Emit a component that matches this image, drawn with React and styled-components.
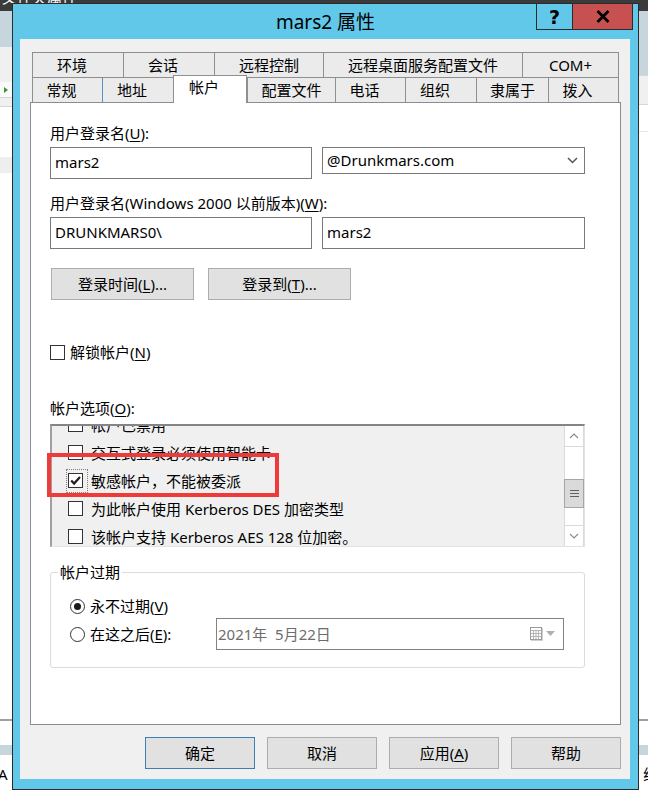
import React, { useLayoutEffect, useRef } from "react";
import styled, { createGlobalStyle } from "styled-components";

const FONT = `"Noto Sans", "Noto Sans CJK SC", sans-serif`;
const FRAME = "#62c8e9";
const BACKBLUE = "#c6d6dc";

const Global = createGlobalStyle`
  html, body { margin: 0; padding: 0; }
  body {
    width: 648px; height: 792px; overflow: hidden;
    font-family: ${FONT}; font-size: 15px; color: #000; background: #fff;
  }
  * { box-sizing: border-box; }
  u { text-decoration-thickness: 1px; text-underline-offset: 2px; }
`;

/* ---------- desktop / window behind ---------- */
const Desktop = styled.div`
  position: relative;
  width: 648px;
  height: 792px;
  overflow: hidden;
  display: flex;
  flex-direction: column;
`;

const BackTitle = styled.div`
  height: 11px;
  flex: 0 0 auto;
  background: #3b3b3b;
  color: #fff;
  overflow: hidden;
  font-size: 15px;
  line-height: 15px;
`;

const BackTitleText = styled.div`
  margin-top: -10px;
  padding-left: 2px;
`;

const BackBody = styled.div`
  flex: 1 1 auto;
  display: flex;
`;

const Pane = styled.div`
  flex: 1 1 0;
  display: flex;
  flex-direction: column;
`;

const Band = styled.div`
  height: ${(p) => (p.$h ? `${p.$h}px` : "auto")};
  flex: ${(p) => (p.$grow ? "1 1 auto" : "0 0 auto")};
  background: ${(p) => p.$bg || "#fff"};
  border-bottom: ${(p) => (p.$line ? `1px solid ${p.$line}` : "none")};
  display: flex;
  align-items: center;
  justify-content: ${(p) => (p.$end ? "flex-end" : "flex-start")};
  overflow: hidden;
  font-size: 15px;
  line-height: 18px;
`;

const ToolIcon = styled.span`
  margin-left: 4px;
  width: 0;
  height: 0;
  border-top: 3px solid transparent;
  border-bottom: 3px solid transparent;
  border-left: 4px solid #3a9a2a;
`;

const EdgeText = styled.span`
  margin: ${(p) => (p.$end ? "0 -10px 0 0" : "0 0 0 -2px")};
`;

/* ---------- dialog ---------- */
const Dialog = styled.div`
  position: absolute;
  left: 12px;
  top: 3px;
  width: 627px;
  height: 787px;
  border: 1px solid #2b2b2b;
  background: ${FRAME};
  display: flex;
  flex-direction: column;
`;

const TitleBar = styled.div`
  position: relative;
  height: 35px;
  flex: 0 0 auto;
  display: flex;
  align-items: center;
  justify-content: center;
`;

const Title = styled.div`
  font-size: 19px;
  line-height: 24px;
  margin-top: 1px;
  color: #000;
`;

const CaptionButtons = styled.div`
  position: absolute;
  top: -1px;
  right: 5px;
  display: flex;
  height: 27px;
`;

const HelpButton = styled.div`
  width: 37px;
  height: 27px;
  border: 1px solid #2b2b2b;
  background: ${FRAME};
  display: flex;
  align-items: center;
  justify-content: center;
  font-family: "DejaVu Sans", sans-serif;
  font-weight: bold;
  font-size: 19px;
  color: #000;
`;

const CloseButton = styled.div`
  width: 61px;
  height: 27px;
  margin-left: -1px;
  border: 1px solid #2b2b2b;
  background: #c75050;
  display: flex;
  align-items: center;
  justify-content: center;
`;

const Client = styled.div`
  flex: 1 1 auto;
  margin: 0 8px 10px 7px;
  background: #f0f0f0;
  padding: 13px 9px 10px 10px;
  display: flex;
  flex-direction: column;
`;

const TabStrip = styled.div`
  margin: 0 2px;
  display: flex;
  flex-direction: column;
`;

const TabRow = styled.div`
  display: flex;
  height: 25px;
`;

const Tab = styled.div`
  position: relative;
  flex: 0 0 auto;
  width: ${(p) => p.$w}px;
  height: ${(p) => (p.$selected ? 28 : 25)}px;
  margin-top: ${(p) => (p.$selected ? -2 : 0)}px;
  background: ${(p) => (p.$selected ? "#fff" : "#ebebeb")};
  border-top: 1px solid #8e8f8f;
  border-left: 1px solid ${(p) => (p.$accent ? "#5a8fc0" : "#8e8f8f")};
  border-right: ${(p) => (p.$last || p.$selected ? "1px solid #8e8f8f" : "none")};
  z-index: ${(p) => (p.$selected ? 2 : 0)};
  text-align: center;
  padding-top: ${(p) => (p.$selected ? 0 : 1)}px;
  padding-right: ${(p) => (p.$narrow ? 12 : 0)}px;
  font-size: 15px;
  line-height: 22px;
  white-space: nowrap;
`;

const Panel = styled.div`
  flex: 1 1 auto;
  background: #fff;
  border: 1px solid #898c95;
  padding: 20px 35px 0 19px;
  display: flex;
  flex-direction: column;
`;

const FieldLabel = styled.div`
  margin-top: ${(p) => p.$mt || 0}px;
  margin-bottom: ${(p) => (p.$mb === undefined ? 4 : p.$mb)}px;
  font-size: 15px;
  line-height: 20px;
  white-space: nowrap;
`;

const FieldRow = styled.div`
  display: flex;
  gap: 10px;
  align-items: flex-start;
  height: 32px;
`;

const TextBox = styled.div`
  flex: 0 0 auto;
  width: ${(p) => p.$w}px;
  height: 32px;
  border: 1px solid #7a7a7a;
  background: #fff;
  padding: 0 4px 3px;
  display: flex;
  align-items: center;
  font-size: 15px;
  line-height: 20px;
`;

const ComboBox = styled(TextBox)`
  height: 27px;
  padding: 0 6px 1px 4px;
  justify-content: space-between;
`;

const ButtonRow = styled.div`
  display: flex;
  gap: 14px;
  margin-top: 19px;
  padding-left: 1px;
`;

const PushButton = styled.div`
  flex: 0 0 auto;
  width: ${(p) => p.$w}px;
  height: 32px;
  background: #e1e1e1;
  border: 1px solid ${(p) => (p.$default ? "#3c7fb1" : "#adadad")};
  display: flex;
  align-items: center;
  justify-content: center;
  font-size: 15px;
  line-height: 20px;
  white-space: nowrap;
`;

const CheckRow = styled.div`
  display: flex;
  align-items: center;
  gap: 5px;
  height: 20px;
  margin-top: 42px;
  font-size: 15px;
  line-height: 20px;
`;

const Box = styled.span`
  flex: 0 0 auto;
  width: 15px;
  height: 15px;
  border: 1px solid #333;
  background: #fff;
  display: inline-flex;
  align-items: center;
  justify-content: center;
`;

const FocusRing = styled.span`
  display: inline-flex;
  padding: 3px 4px 4px 1px;
  margin: -4px -5px -5px -2px;
  border: 1px dotted #808080;
`;

const ListBox = styled.div`
  position: relative;
  height: 123px;
  margin-top: 6px;
  background: #f0f0f0;
  border-style: solid;
  border-width: 2px 1px 1px 2px;
  border-color: #858585 #e3e3e3 #e3e3e3 #a0a0a0;
  display: flex;
`;

const ListViewport = styled.div`
  flex: 1 1 auto;
  overflow: hidden;
`;

const ListItem = styled.div`
  height: 28px;
  display: flex;
  align-items: center;
  gap: 8px;
  padding-left: 16px;
  font-size: 15px;
  line-height: 20px;
  white-space: nowrap;
`;

const ItemText = styled.span`
  margin-top: 2px;
`;

const ScrollBar = styled.div`
  flex: 0 0 20px;
  background: #fff;
  border-left: 1px solid #dadada;
  border-right: 1px solid #dadada;
  display: flex;
  flex-direction: column;
`;

const ScrollButton = styled.div`
  height: 21px;
  flex: 0 0 auto;
  display: flex;
  align-items: center;
  justify-content: center;
  border-top: ${(p) => (p.$down ? "1px solid #dadada" : "none")};
  border-bottom: ${(p) => (p.$down ? "none" : "1px solid #dadada")};
`;

const Track = styled.div`
  flex: 1 1 auto;
  display: flex;
  flex-direction: column;
`;

const Thumb = styled.div`
  margin-top: 32px;
  height: 29px;
  background: #dadada;
  border: 1px solid #a6a6a6;
  margin-left: -1px;
  margin-right: -1px;
  display: flex;
  flex-direction: column;
  align-items: center;
  justify-content: center;
  gap: 2px;
`;

const GripLine = styled.span`
  width: 9px;
  height: 1px;
  background: #606060;
`;

const Annotation = styled.div`
  position: absolute;
  left: -5px;
  top: 27px;
  width: 232px;
  height: 44px;
  border: 4px solid #ef3a3a;
  z-index: 3;
  pointer-events: none;
`;

const Group = styled.fieldset`
  margin: 15px 0 0;
  min-inline-size: 0;
  border: 1px solid #dcdcdc;
  border-radius: 3px;
  padding: 14px 0 17px 7px;
`;

const Legend = styled.legend`
  padding: 0 2px;
  font-size: 15px;
  line-height: 20px;
`;

const GroupBody = styled.div`
  padding-left: 12px;
  display: flex;
  flex-direction: column;
  gap: 2px;
`;

const RadioRow = styled.div`
  display: flex;
  align-items: center;
  height: ${(p) => p.$h}px;
`;

const RadioLabel = styled.div`
  flex: 0 0 auto;
  width: ${(p) => (p.$w ? `${p.$w}px` : "auto")};
  display: flex;
  align-items: center;
  gap: 5px;
  font-size: 15px;
  line-height: 20px;
`;

const Circle = styled.span`
  flex: 0 0 auto;
  width: 15px;
  height: 15px;
  border-radius: 50%;
  border: 1px solid #333;
  background: #fff;
  display: inline-flex;
  align-items: center;
  justify-content: center;
`;

const Dot = styled.span`
  width: 7px;
  height: 7px;
  border-radius: 50%;
  background: #1a1a1a;
`;

const DatePicker = styled.div`
  flex: 0 0 auto;
  width: 348px;
  height: 32px;
  border: 1px solid #828282;
  background: #fff;
  display: flex;
  align-items: center;
  justify-content: space-between;
  padding: 0 8px 1px 1px;
  color: #6d6d6d;
  font-size: 15px;
  line-height: 20px;
  white-space: pre;
`;

const PickerIcons = styled.span`
  display: flex;
  align-items: center;
  gap: 3px;
`;

const DialogButtons = styled.div`
  margin-top: 12px;
  display: flex;
  justify-content: flex-end;
  gap: 12px;
`;

/* ---------- icons ---------- */
const CheckMark = () => (
  <svg width="13" height="13" viewBox="0 0 13 13">
    <path d="M2.2 6.6 L5.1 9.6 L11 3" stroke="#1e1e1e" strokeWidth="2.2" fill="none" />
  </svg>
);

const CloseGlyph = () => (
  <svg width="14" height="13" viewBox="0 0 14 13">
    <path d="M1.5 1 L12.5 12 M12.5 1 L1.5 12" stroke="#000" strokeWidth="2.8" fill="none" />
  </svg>
);

const ComboChevron = () => (
  <svg width="11" height="7" viewBox="0 0 11 7">
    <path d="M1 1 L5.5 5.5 L10 1" stroke="#555" strokeWidth="1.5" fill="none" />
  </svg>
);

const ScrollChevron = ({ down }) => (
  <svg width="10" height="6" viewBox="0 0 10 6">
    <path d={down ? "M1 1 L5 5 L9 1" : "M1 5 L5 1 L9 5"} stroke="#8a8a8a" strokeWidth="1.1" fill="none" />
  </svg>
);

const CalendarIcon = () => (
  <svg width="14" height="15" viewBox="0 0 14 15">
    <rect x="1.5" y="1.5" width="11" height="12" fill="#fff" stroke="#9a9a9a" />
    <path d="M1.5 4.5 H12.5 M1.5 7.5 H12.5 M1.5 10.5 H12.5 M4.5 4.5 V13.5 M7 4.5 V13.5 M9.5 4.5 V13.5" stroke="#b5b5b5" strokeWidth="1" />
    <path d="M2 14.5 H13.5 V2" stroke="#d0d0d0" strokeWidth="1" fill="none" />
  </svg>
);

const DropTriangle = () => (
  <svg width="9" height="5" viewBox="0 0 9 5">
    <path d="M0 0 H9 L4.5 5 Z" fill="#b0b0b0" />
  </svg>
);

/* ---------- data ---------- */
const ROW1 = [
  { t: "环境", w: 91, n: true },
  { t: "会话", w: 91, n: true },
  { t: "远程控制", w: 109 },
  { t: "远程桌面服务配置文件", w: 199 },
  { t: "COM+", w: 97 },
];

const ROW2 = [
  { t: "常规", w: 70, n: true },
  { t: "地址", w: 71, n: true, a: true },
  { t: "帐户", w: 74, n: true, s: true },
  { t: "配置文件", w: 88 },
  { t: "电话", w: 70, n: true },
  { t: "组织", w: 71, n: true },
  { t: "隶属于", w: 72 },
  { t: "拨入", w: 71, n: true },
];

const OPTIONS = [
  "用户下次登录时须更改密码",
  "用户不能更改密码",
  "密码永不过期",
  "使用可逆加密存储密码",
  "帐户已禁用",
  "交互式登录必须使用智能卡",
  "敏感帐户，不能被委派",
  "为此帐户使用 Kerberos DES 加密类型",
  "该帐户支持 Kerberos AES 128 位加密。",
  "该帐户支持 Kerberos AES 256 位加密。",
  "不要求 Kerberos 预身份验证",
];

const CHECKED = 6;

function TabRowView({ tabs }) {
  return (
    <TabRow>
      {tabs.map((tab, i) => (
        <Tab
          key={tab.t}
          $w={tab.w}
          $narrow={tab.n}
          $accent={tab.a}
          $selected={tab.s}
          $last={i === tabs.length - 1}
        >
          {tab.t}
        </Tab>
      ))}
    </TabRow>
  );
}

function BottomBands({ text, end }) {
  return (
    <>
      <Band $h={2} $bg="#a0a0a0" />
      <Band $h={24} />
      <Band $h={10} $bg={BACKBLUE} />
      <Band $h={37} $end={end}>
        <EdgeText $end={end}>{text}</EdgeText>
      </Band>
    </>
  );
}

export default function App() {
  const listRef = useRef(null);
  useLayoutEffect(() => {
    if (listRef.current) listRef.current.scrollTop = 128;
  }, []);

  return (
    <>
      <Global />
      <Desktop>
        <BackTitle>
          <BackTitleText>文件夹属性</BackTitleText>
        </BackTitle>
        <BackBody>
          <Pane>
            <Band $h={36} $bg={BACKBLUE} />
            <Band $h={35} $bg="#f0f0f0" />
            <Band $h={16} $bg="#fafafa" $line="#d5d5d5">
              <ToolIcon />
            </Band>
            <Band $h={9} $bg="#f0f0f0" $line="#d5d5d5" />
            <Band $h={50} />
            <Band $h={16} $bg="#eeeeee" />
            <Band $grow />
            <BottomBands text="A" />
          </Pane>
          <Pane>
            <Band $h={65} $bg={BACKBLUE} $line="#d8d8d8" />
            <Band $h={29} $bg="#f0f0f0" $line="#d8d8d8" />
            <Band $h={27} $line="#e6e6e6" />
            <Band $grow />
            <BottomBands text="线" end />
          </Pane>
        </BackBody>

        <Dialog>
          <TitleBar>
            <Title>mars2 属性</Title>
            <CaptionButtons>
              <HelpButton>?</HelpButton>
              <CloseButton>
                <CloseGlyph />
              </CloseButton>
            </CaptionButtons>
          </TitleBar>

          <Client>
            <TabStrip>
              <TabRowView tabs={ROW1} />
              <TabRowView tabs={ROW2} />
            </TabStrip>

            <Panel>
              <FieldLabel>
                用户登录名(<u>U</u>):
              </FieldLabel>
              <FieldRow>
                <TextBox $w={262}>mars2</TextBox>
                <ComboBox $w={263}>
                  <span>@Drunkmars.com</span>
                  <ComboChevron />
                </ComboBox>
              </FieldRow>

              <FieldLabel $mt={14}>
                用户登录名(Windows 2000 以前版本)(<u>W</u>):
              </FieldLabel>
              <FieldRow>
                <TextBox $w={262}>{"DRUNKMARS0\\"}</TextBox>
                <TextBox $w={263}>mars2</TextBox>
              </FieldRow>

              <ButtonRow>
                <PushButton $w={143}>
                  登录时间(<u>L</u>)...
                </PushButton>
                <PushButton $w={143}>
                  登录到(<u>T</u>)...
                </PushButton>
              </ButtonRow>

              <CheckRow>
                <Box />
                <span>
                  解锁帐户(<u>N</u>)
                </span>
              </CheckRow>

              <FieldLabel $mt={36} $mb={0}>
                帐户选项(<u>O</u>):
              </FieldLabel>
              <ListBox>
                <ListViewport ref={listRef}>
                  {OPTIONS.map((opt, i) => (
                    <ListItem key={opt}>
                      {i === CHECKED ? (
                        <FocusRing>
                          <Box>
                            <CheckMark />
                          </Box>
                        </FocusRing>
                      ) : (
                        <Box />
                      )}
                      <ItemText>{opt}</ItemText>
                    </ListItem>
                  ))}
                </ListViewport>
                <ScrollBar>
                  <ScrollButton>
                    <ScrollChevron />
                  </ScrollButton>
                  <Track>
                    <Thumb>
                      <GripLine />
                      <GripLine />
                      <GripLine />
                    </Thumb>
                  </Track>
                  <ScrollButton $down>
                    <ScrollChevron down />
                  </ScrollButton>
                </ScrollBar>
                <Annotation />
              </ListBox>

              <Group>
                <Legend>帐户过期</Legend>
                <GroupBody>
                  <RadioRow $h={20}>
                    <RadioLabel>
                      <Circle>
                        <Dot />
                      </Circle>
                      <span>
                        永不过期(<u>V</u>)
                      </span>
                    </RadioLabel>
                  </RadioRow>
                  <RadioRow $h={32}>
                    <RadioLabel $w={146}>
                      <Circle />
                      <span>
                        在这之后(<u>E</u>):
                      </span>
                    </RadioLabel>
                    <DatePicker>
                      <span>{"2021年  5月22日"}</span>
                      <PickerIcons>
                        <CalendarIcon />
                        <DropTriangle />
                      </PickerIcons>
                    </DatePicker>
                  </RadioRow>
                </GroupBody>
              </Group>
            </Panel>

            <DialogButtons>
              <PushButton $w={110} $default>
                确定
              </PushButton>
              <PushButton $w={110}>取消</PushButton>
              <PushButton $w={110}>
                应用(<u>A</u>)
              </PushButton>
              <PushButton $w={110}>帮助</PushButton>
            </DialogButtons>
          </Client>
        </Dialog>
      </Desktop>
    </>
  );
}
